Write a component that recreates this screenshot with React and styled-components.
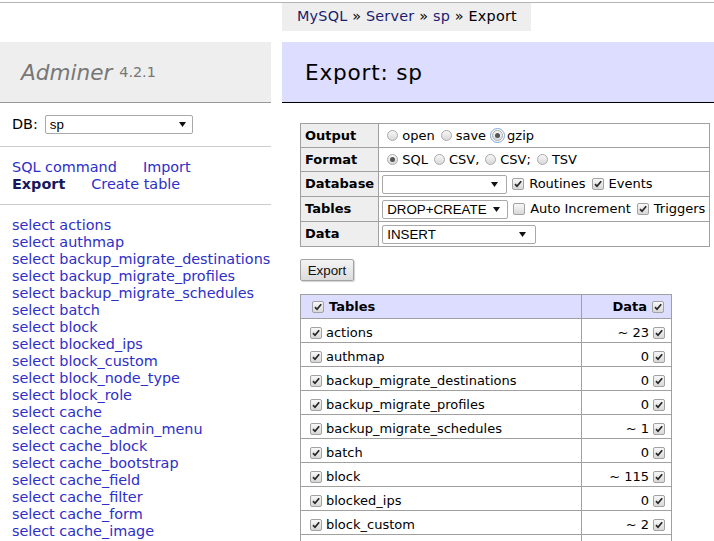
import React from 'react';
import styled, { createGlobalStyle } from 'styled-components';

const GlobalStyle = createGlobalStyle`
  html, body { margin: 0; padding: 0; background: #fff; overflow: hidden; }
  body {
    font-family: "DejaVu Sans", Verdana, sans-serif;
    font-size: 14.4px;
    line-height: 17px;
    color: #000;
  }
`;

const TopRule = styled.div`
  height: 1px;
  margin-top: 2px;
  background: #b4b4b4;
`;

const Shell = styled.div`
  display: flex;
  align-items: flex-start;
`;

/* ---------- sidebar ---------- */
const Sidebar = styled.aside`
  width: 271px;
  flex: none;
  margin-top: 39px;
  overflow: hidden;
`;

const Logo = styled.h1`
  margin: 0;
  height: 60px;
  display: flex;
  align-items: center;
  padding: 0 21px;
  background: #eee;
  border-bottom: 1px solid #999;
  font-size: 21.6px;
  line-height: 27px;
  font-weight: normal;
  color: #777;
  white-space: nowrap;
`;

const LogoName = styled.span`
  font-style: italic;
  white-space: pre;
`;

const Version = styled.span`
  font-size: 14.4px;
  color: #777;
`;

const MenuSection = styled.div`
  padding: 12px 12px 11.5px;
  border-bottom: ${(p) => (p.$last ? 'none' : '1px solid #ccc')};
  white-space: nowrap;
`;

const DbRow = styled.div`
  display: flex;
  align-items: center;
  gap: 7px;
  height: 19px;
`;

const LinkLine = styled.div`
  display: flex;
  gap: 26px;
`;

const NavLink = styled.a`
  color: ${(p) => (p.$active ? '#17175e' : '#2e2ec8')};
  font-weight: ${(p) => (p.$active ? 'bold' : 'normal')};
  text-decoration: none;
`;

const TableLink = styled.a`
  display: block;
  color: #2e2ec8;
  text-decoration: none;
`;

/* ---------- form controls ---------- */
const SelectWrap = styled.span`
  position: relative;
  display: inline-block;
  flex: none;
  width: ${(p) => p.$w}px;
  height: 19px;
`;

const NativeSelect = styled.select`
  appearance: none;
  -webkit-appearance: none;
  box-sizing: border-box;
  width: 100%;
  height: 100%;
  margin: 0;
  padding: 0 16px 0 4px;
  border: 1px solid #a9a9a9;
  border-radius: 2px;
  background: #fff;
  color: #000;
  font-family: "Liberation Sans", Arial, sans-serif;
  font-size: 13.33px;
  line-height: 17px;
`;

const SelectArrow = styled.svg`
  position: absolute;
  right: ${(p) => p.$right || 8}px;
  top: 7px;
  pointer-events: none;
`;

function Select({ width, value, arrowRight }) {
  return (
    <SelectWrap $w={width}>
      <NativeSelect value={value} onChange={() => {}}>
        <option value={value}>{value}</option>
      </NativeSelect>
      <SelectArrow $right={arrowRight} width="7" height="5" viewBox="0 0 7 5">
        <path d="M0 0 H7 L3.5 5 Z" fill="#111" />
      </SelectArrow>
    </SelectWrap>
  );
}

const Box = styled.span`
  box-sizing: border-box;
  display: inline-flex;
  align-items: center;
  justify-content: center;
  flex: none;
  width: 12px;
  height: 12px;
  border: 1px solid #a2a2a2;
  border-radius: 2px;
  background: linear-gradient(#f8f8f8, #d8d8d8);
`;

function Check({ checked = true }) {
  return (
    <Box>
      {checked && (
        <svg width="10" height="10" viewBox="0 0 10 10">
          <path d="M2 5.2 L4 7.3 L8.2 2.2" fill="none" stroke="#262626" strokeWidth="1.7" />
        </svg>
      )}
    </Box>
  );
}

const RadioCircle = styled.span`
  box-sizing: border-box;
  display: inline-flex;
  align-items: center;
  justify-content: center;
  flex: none;
  width: 11px;
  height: 11px;
  border: 1px solid #ababab;
  border-radius: 50%;
  background: linear-gradient(#f8f8f8, #d8d8d8);
  outline: ${(p) => (p.$focus ? '1px solid #7fa6d4' : 'none')};
  outline-offset: 1px;
`;

const RadioDot = styled.span`
  width: 5px;
  height: 5px;
  border-radius: 50%;
  background: #555;
`;

function Radio({ checked, focus }) {
  return <RadioCircle $focus={focus}>{checked && <RadioDot />}</RadioCircle>;
}

const Choice = styled.label`
  display: inline-flex;
  align-items: center;
  gap: ${(p) => p.$gap || 4}px;
  margin-left: ${(p) => p.$ml ?? 6}px;
  white-space: nowrap;
`;

const FieldRow = styled.div`
  display: flex;
  align-items: center;
`;

/* ---------- main ---------- */
const Main = styled.main`
  flex: 1;
  min-width: 0;
  margin-left: 11px;
`;

const Breadcrumb = styled.nav`
  box-sizing: border-box;
  width: 249px;
  height: 28px;
  line-height: 27px;
  padding: 0 15px;
  background: #eee;
  white-space: nowrap;
  letter-spacing: 0.2px;
`;

const CrumbLink = styled.a`
  color: #1d1d6e;
  text-decoration: none;
`;

const PageTitle = styled.h2`
  margin: 11px 0 20px;
  height: 60px;
  display: flex;
  align-items: center;
  padding: 0 23px;
  background: #ddf;
  border-bottom: 1px solid #000;
  font-size: 21.6px;
  line-height: 27px;
  font-weight: normal;
  letter-spacing: 0.8px;
`;

const Content = styled.div`
  padding-left: 18px;
`;

const OptionsTable = styled.table`
  border-collapse: collapse;
  font-size: 13px;
  line-height: 16px;
`;

const Row = styled.tr`
  height: ${(p) => p.$h}px;
`;

const HeadCell = styled.th`
  box-sizing: border-box;
  width: 78px;
  padding: 0 4px;
  background: #eee;
  border: 1px solid #a0a0a0;
  text-align: left;
  font-weight: bold;
`;

const Cell = styled.td`
  padding: 0 4px 0 3px;
  border: 1px solid #a0a0a0;
  white-space: nowrap;
`;

const ExportButton = styled.button`
  display: block;
  box-sizing: border-box;
  width: 54px;
  height: 22px;
  margin: 12px 0 13px;
  padding: 0;
  border: 1px solid #a3a3a3;
  border-radius: 2px;
  background: linear-gradient(#f4f4f4, #dcdcdc);
  box-shadow: 1px 1px 1px rgba(0, 0, 0, 0.18);
  color: #111;
  font-family: "Liberation Sans", Arial, sans-serif;
  font-size: 13.33px;
`;

const ListTable = styled.table`
  border-collapse: collapse;
  table-layout: fixed;
  width: 371px;
  font-size: 13px;
  line-height: 16px;
`;

const ListHead = styled.th`
  height: 22px;
  padding: ${(p) => (p.$right ? '1px 7px 0 0' : '1px 0 0 11px')};
  background: #ddf;
  border: 1px solid #a0a0a0;
  font-weight: bold;
`;

const ListCell = styled.td`
  height: 19px;
  padding: ${(p) => (p.$right ? '4px 6px 0 0' : '4px 0 0 9px')};
  border: 1px solid #a0a0a0;
  white-space: nowrap;
  overflow: hidden;
`;

const CellLabel = styled.label`
  display: flex;
  align-items: center;
  justify-content: ${(p) => (p.$right ? 'flex-end' : 'flex-start')};
  gap: ${(p) => p.$gap || 4}px;
`;

const sidebarTables = [
  'actions', 'authmap', 'backup_migrate_destinations', 'backup_migrate_profiles',
  'backup_migrate_schedules', 'batch', 'block', 'blocked_ips', 'block_custom',
  'block_node_type', 'block_role', 'cache', 'cache_admin_menu', 'cache_block',
  'cache_bootstrap', 'cache_field', 'cache_filter', 'cache_form', 'cache_image',
  'cache_libraries', 'cache_menu', 'cache_page',
];

const tableRows = [
  ['actions', '~ 23'],
  ['authmap', '0'],
  ['backup_migrate_destinations', '0'],
  ['backup_migrate_profiles', '0'],
  ['backup_migrate_schedules', '~ 1'],
  ['batch', '0'],
  ['block', '~ 115'],
  ['blocked_ips', '0'],
  ['block_custom', '~ 2'],
  ['block_node_type', '0'],
  ['block_role', '~ 40'],
];

export default function App() {
  return (
    <>
      <GlobalStyle />
      <TopRule />
      <Shell>
        <Sidebar>
          <Logo>
            <LogoName>Adminer </LogoName>
            <Version>4.2.1</Version>
          </Logo>
          <MenuSection>
            <DbRow>
              <span>DB:</span>
              <Select width={148} value="sp" arrowRight={7} />
            </DbRow>
          </MenuSection>
          <MenuSection>
            <LinkLine>
              <NavLink href="#">SQL command</NavLink>
              <NavLink href="#">Import</NavLink>
            </LinkLine>
            <LinkLine>
              <NavLink href="#" $active>Export</NavLink>
              <NavLink href="#">Create table</NavLink>
            </LinkLine>
          </MenuSection>
          <MenuSection $last>
            {sidebarTables.map((t) => (
              <TableLink key={t} href="#">select {t}</TableLink>
            ))}
          </MenuSection>
        </Sidebar>

        <Main>
          <Breadcrumb>
            <CrumbLink href="#">MySQL</CrumbLink> » <CrumbLink href="#">Server</CrumbLink> »{' '}
            <CrumbLink href="#">sp</CrumbLink> » Export
          </Breadcrumb>
          <PageTitle>Export: sp</PageTitle>
          <Content>
            <OptionsTable>
              <tbody>
                <Row $h={24}>
                  <HeadCell>Output</HeadCell>
                  <Cell>
                    <FieldRow>
                      <Choice $ml={5}><Radio />open</Choice>
                      <Choice><Radio />save</Choice>
                      <Choice><Radio checked focus />gzip</Choice>
                    </FieldRow>
                  </Cell>
                </Row>
                <Row $h={24}>
                  <HeadCell>Format</HeadCell>
                  <Cell>
                    <FieldRow>
                      <Choice $ml={5}><Radio checked />SQL</Choice>
                      <Choice><Radio />CSV,</Choice>
                      <Choice><Radio />CSV;</Choice>
                      <Choice><Radio />TSV</Choice>
                    </FieldRow>
                  </Cell>
                </Row>
                <Row $h={25}>
                  <HeadCell>Database</HeadCell>
                  <Cell>
                    <FieldRow>
                      <Select width={125} value="" arrowRight={9} />
                      <Choice $ml={5} $gap={5}><Check />Routines</Choice>
                      <Choice $gap={5}><Check />Events</Choice>
                    </FieldRow>
                  </Cell>
                </Row>
                <Row $h={25}>
                  <HeadCell>Tables</HeadCell>
                  <Cell>
                    <FieldRow>
                      <Select width={126} value="DROP+CREATE" arrowRight={8} />
                      <Choice $ml={5} $gap={5}><Check checked={false} />Auto Increment</Choice>
                      <Choice $gap={5}><Check />Triggers</Choice>
                    </FieldRow>
                  </Cell>
                </Row>
                <Row $h={25}>
                  <HeadCell>Data</HeadCell>
                  <Cell>
                    <FieldRow>
                      <Select width={154} value="INSERT" arrowRight={10} />
                    </FieldRow>
                  </Cell>
                </Row>
              </tbody>
            </OptionsTable>

            <ExportButton type="button">Export</ExportButton>

            <ListTable>
              <colgroup>
                <col style={{ width: 281 }} />
                <col style={{ width: 90 }} />
              </colgroup>
              <thead>
                <tr>
                  <ListHead>
                    <CellLabel $gap={5}><Check />Tables</CellLabel>
                  </ListHead>
                  <ListHead $right>
                    <CellLabel $right $gap={5}>Data<Check /></CellLabel>
                  </ListHead>
                </tr>
              </thead>
              <tbody>
                {tableRows.map(([name, rows]) => (
                  <tr key={name}>
                    <ListCell>
                      <CellLabel><Check />{name}</CellLabel>
                    </ListCell>
                    <ListCell $right>
                      <CellLabel $right>{rows}<Check /></CellLabel>
                    </ListCell>
                  </tr>
                ))}
              </tbody>
            </ListTable>
          </Content>
        </Main>
      </Shell>
    </>
  );
}
